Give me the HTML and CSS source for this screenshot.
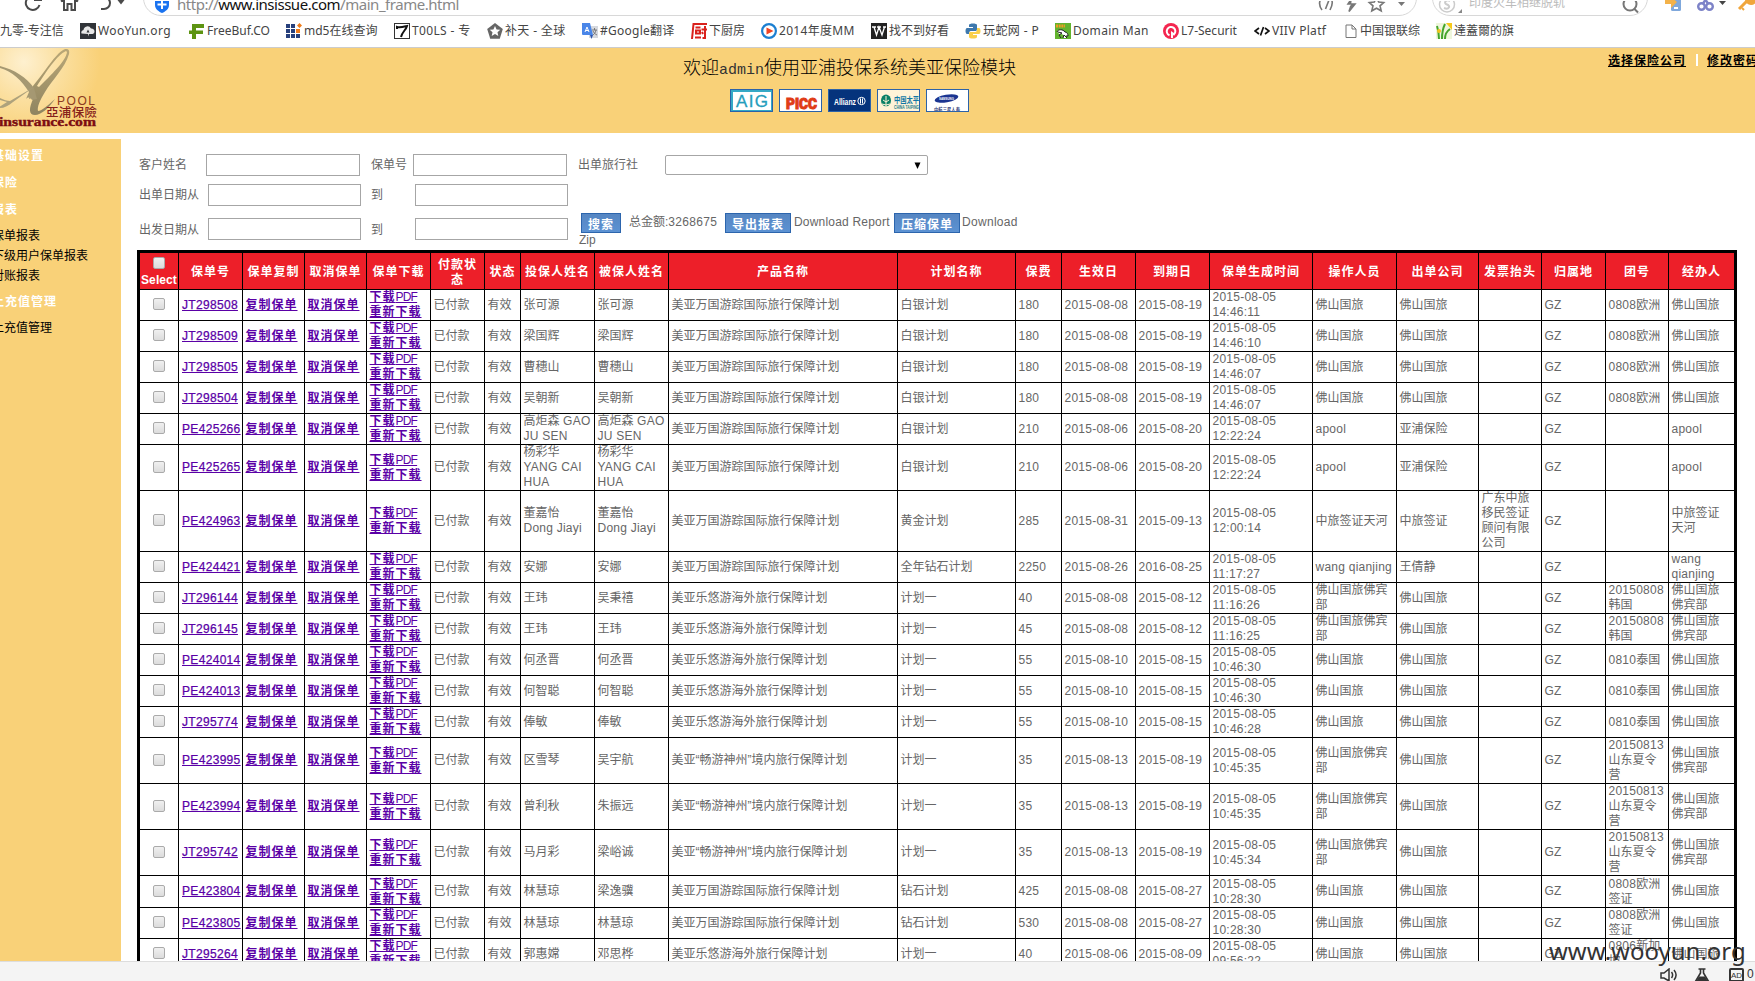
FILE: index.html
```html
<!DOCTYPE html>
<html lang="zh-CN">
<head>
<meta charset="utf-8">
<title>main_frame</title>
<link rel="stylesheet" href="styles.css">
</head>
<body>
<div class="toolbar">
  <svg class="nav" width="143" height="16" viewBox="0 0 143 16" fill="none" stroke="#4a4a4a" stroke-width="2">
    <path d="M36.500 -3A7 7 0 1 0 39.500 5"/><path d="M34 0h7v-5"/>
    <path d="M61 1.500l8.500-7 8.500 7M64 0v10h3.500V4h4v6H75V0"/>
    <path d="M100 -3h4a5 5 0 0 1 0 12h-3"/>
    <path d="M117.500 0h7l-3.500 4.500z" fill="#4a4a4a" stroke="none"/>
  </svg>
  <div class="address">
    <svg width="16" height="16" viewBox="0 0 16 16"><path d="M1-4h14v8c0 4-3.500 6.500-7 8-3.500-1.500-7-4-7-8z" fill="#1a73f0"/><path d="M8-1v9M3.500 3.500h9" stroke="#fff" stroke-width="2"/></svg>
    <span class="url">http://<b>www.insissue.com</b>/main_frame.html</span>
    <svg class="tools" width="90" height="16" viewBox="0 0 90 16" fill="none" stroke="#777" stroke-width="1.600">
      <path d="M5-4c-3 4-3 9 0 13M13-4c3 4 3 7 0 13M8-1h4L8.500 8"/>
      <path d="M35-3l-4 6h7l-6 7.500 2-6" fill="#777"/>
      <path d="M59.500-4l2.200 5 5 .5-3.700 3.300 1.200 5-4.700-2.600-4.700 2.600 1.200-5L52.300 1.500l5-.5z"/>
      <path d="M81 1h7l-3.500 4z" fill="#777" stroke="none"/>
    </svg>
  </div>
  <div class="search">
    <svg width="26" height="16" viewBox="0 0 26 16"><circle cx="9" cy="3.500" r="7.500" fill="none" stroke="#ccc" stroke-width="1.500"/><path d="M12 0C8-2 5 2 9 3.500S11 9 6 7" fill="none" stroke="#ccc" stroke-width="2"/><path d="M24 8v4h-4z" fill="#888"/></svg>
    <span class="hint">印度火车相继脱轨</span>
    <svg width="20" height="16" viewBox="0 0 20 16" fill="none" stroke="#777" stroke-width="2"><circle cx="9" cy="3" r="6.500"/><path d="M13 7.500l4 4"/></svg>
  </div>
  <svg class="extras" width="90" height="16" viewBox="0 0 90 16">
    <rect x="6" y="-6" width="10" height="17" rx="1.500" fill="#7fa8dc"/><rect x="9" y="7" width="4" height="2" fill="#fff"/><path d="M0 0h5v-4l7 6-6 6V4H0z" fill="#f3b24a"/>
    <g fill="none" stroke="#7d83c8" stroke-width="2.400"><circle cx="36.500" cy="6.500" r="3.300"/><circle cx="44.500" cy="6.500" r="3.300"/><path d="M38 3.500L43-4M43 3.500L38-4"/></g>
    <path d="M54 1h7l-3.500 4z" fill="#444"/>
    <path d="M74 9l9-9" stroke="#f0a63c" stroke-width="3"/><path d="M77 8l2 2" stroke="#f0a63c" stroke-width="2"/><circle cx="86" cy="-1" r="6" fill="#f0a63c"/>
  </svg>
</div>

<div class="bookmarks">
  <span class="bm"><span>九零-专注信</span></span>
  <span class="bm"><svg viewBox="0 0 16 16"><rect width="16" height="16" fill="#303338"/><path d="M1.500 10.500a2.500 2.500 0 0 1 2-3.500A4 4 0 0 1 11 5.500a3 3 0 0 1 3.500 3c0 2-1.500 2.500-3 2.500H9l-1 2.500V11z" fill="#e8e8e8"/><path d="M8 6.500l1.500 3h-3z" fill="#303338"/></svg><span class="t1">WooYun.org</span></span>
  <span class="bm"><svg viewBox="0 0 16 16"><path d="M3 1h12v4H7v2.500h7V11H7v5H3v-5H0V7.500h3z" fill="#5d9412"/></svg><span class="t2">FreeBuf.CO</span></span>
  <span class="bm"><svg viewBox="0 0 16 16"><path d="M0 1h4v4H0zM5 1h4v4H5zM0 6h4v4H0zM5 6h4v4H5zM0 11h4v4H0zM5 11h4v4H5zM10 11h4v4h-4z" fill="#27407c"/><path d="M10 6h4v4h-4zM11 2.500L13.500 0 16 2.500 13.500 5z" fill="#f07c1a"/></svg><span class="t3">md5在线查询</span></span>
  <span class="bm"><svg viewBox="0 0 16 16"><rect x=".5" y=".5" width="15" height="15" fill="#fff" stroke="#333"/><path d="M3 6V4c3 1 6 0 10-1-1 4-5 6-6 11" fill="none" stroke="#111" stroke-width="2"/></svg><span class="t4">T00LS - 专</span></span>
  <span class="bm"><svg viewBox="0 0 16 16"><path d="M8 0l7.800 6-3 9.700H3.200L.2 6z" fill="#666"/><path d="M8 3l1.600 3.400 3.700.4-2.800 2.400.8 3.800L8 11l-3.300 2 .8-3.800-2.800-2.400 3.700-.4z" fill="#fff"/></svg><span class="t5">补天 - 全球</span></span>
  <span class="bm"><svg viewBox="0 0 16 16"><rect x="7" y="3" width="9" height="12" fill="#d5d8de"/><path d="M0 0h8l3 12H1a1 1 0 0 1-1-1z" fill="#4a86e8"/><path d="M8 12h3l-1.500 4z" fill="#2e55ad"/><path d="M3 9l2-5 2 5M3.700 7.500h2.600" stroke="#fff" fill="none"/><path d="M10 7h5M12.500 5v2M14 7c-.500 3-2 4-3 5M11 8c1 2 2 3 4 4" stroke="#666" fill="none" stroke-width=".8"/></svg><span class="t6">#Google翻译</span></span>
  <span class="bm"><svg viewBox="0 0 16 16" fill="none" stroke="#d9211c" stroke-width="2"><path d="M1 16L2.500 1H16M4.500 4.500h5M5 7.500h4v3H5zM4 14.500h6M10.500 6.500H16M14 3v12h-2.500M11 9l1 2"/></svg><span>下厨房</span></span>
  <span class="bm"><svg viewBox="0 0 16 16"><circle cx="8" cy="8" r="6.900" fill="#fff" stroke="#1b7fd1" stroke-width="2.200"/><path d="M5.500 4.500l7 3.500-7 3.500z" fill="#ef4323"/></svg><span class="t8">2014年度MM</span></span>
  <span class="bm"><svg viewBox="0 0 16 16"><rect width="16" height="16" fill="#222"/><path d="M1 4h4M6 4h4M12 4h3M3 4l2.500 8L8 4l3 8 2.500-8" fill="none" stroke="#fff" stroke-width="1.300"/></svg><span>找不到好看</span></span>
  <span class="bm"><svg viewBox="0 0 16 16"><path d="M4 4V2c0-2 8-2 8 0v4c0 2-1 2-2 2H6C4 8 4 10 4 11H2C0 11 0 5 2 5h6V4z" fill="#3d78ad"/><path d="M12 12v2c0 2-8 2-8 0v-3c0-2 1-2 2-2h4c2 0 2-2 2-4h2c2 0 2 6 0 6H8v1z" fill="#fad04a"/></svg><span class="t10">玩蛇网 - P</span></span>
  <span class="bm"><svg viewBox="0 0 16 16"><rect width="16" height="16" fill="#62b32e"/><path d="M1 3h9" stroke="#f59a23" stroke-width="3" stroke-dasharray="2 .7"/><path d="M2 9c1-3 6-3 8 0 2 0 3 2 3 4l-2 0M3 9l4 1-3 2 2 3M8 15l1-3 3 3" fill="#fff" stroke="#222"/></svg><span class="t11">Domain Man</span></span>
  <span class="bm"><svg viewBox="0 0 16 16"><circle cx="8" cy="8" r="8" fill="#f4264f"/><path d="M6.500 12.300A4.300 4.300 0 1 1 11 11.400l-2-1.500V15" fill="none" stroke="#fff" stroke-width="2"/></svg><span class="t12">L7-Securit</span></span>
  <span class="bm"><svg viewBox="0 0 16 16" fill="none" stroke="#111" stroke-width="1.700"><path d="M5 5L1 8l4 3M11 5l4 3-4 3M9.500 4l-3 8.500"/></svg><span class="t13">VIIV Platf</span></span>
  <span class="bm file"><svg viewBox="0 0 12 16" fill="#fff" stroke="#777"><path d="M1 2h6l4 4v8.500H1zM7 2v4h4"/></svg><span>中国银联综</span></span>
  <span class="bm"><svg viewBox="0 0 16 16"><rect width="16" height="16" fill="#eef6dc"/><path d="M10 0h6v7z" fill="#f7c819"/><path d="M3 16C3 10 2 6 1 3M6 16C6 9 7 5 9 1M9 16c0-5 2-8 5-10" stroke="#45a52c" stroke-width="2" fill="none"/><circle cx="3" cy="8" r="2" fill="#f3c31d"/></svg><span>達蓋爾的旗</span></span>
</div>

<header class="banner">
  <svg class="logo" width="100" height="85" viewBox="0 0 100 85">
    <defs>
      <radialGradient id="glow" gradientUnits="userSpaceOnUse" cx="24" cy="14" r="76"><stop offset="0" stop-color="#fef0cf"/><stop offset=".5" stop-color="#fbdf9f"/><stop offset="1" stop-color="#f9d178"/></radialGradient>
      <linearGradient id="ink" x1="0" y1="0" x2="0" y2="1"><stop offset="0" stop-color="#b9a777"/><stop offset="1" stop-color="#8f8460"/></linearGradient>
    </defs>
    <rect width="100" height="85" fill="url(#glow)"/>
    <path fill-rule="evenodd" d="M33 38C45 24 55 6 64 1.500c4-1.500 6 .5 5 4.500-4 14-17 26-24 38-5 8-8 15-7 19 4 0 10-6 17-12-6 9-14 16-20 16-6 0-7-6-1-18l-5 2zM66 3C57 7 46 24 37 38l2 1C50 28 66 13 67 4z" fill="url(#ink)"/>
    <path d="M0 18c15 4 26 11 34 22l3 11-5 1c-2-3-4-3-6-1l3-7C22 33 12 23 0 20z" fill="#a59872"/>
    <path d="M0 50c4 2 7 3 10 3l24-14-21 15C8 58 4 60 0 60v-1.500l7-4.500-7-2z" fill="#aea27c"/>
    <text x="57" y="56.500" class="lg-pool" textLength="38">POOL</text>
    <text x="46" y="69" class="lg-cjk" textLength="51">亞浦保險</text>
    <text x="-1" y="77.500" class="lg-com" textLength="97" lengthAdjust="spacingAndGlyphs">insurance.com</text>
  </svg>
  <div class="welcome">
    <h1>欢迎<span>admin</span>使用亚浦投保系统美亚保险模块</h1>
    <div class="brands">
      <a class="brand aig"><svg viewBox="0 0 41 21"><path d="M0 1h41M1 0v21" stroke="#35a9c6" stroke-width="2"/><path d="M0 20.500h41M40.500 0v21" stroke="#35a9c6"/><text x="5" y="17" textLength="32">AIG</text></svg></a>
      <a class="brand picc"><svg viewBox="0 0 41 21"><text x="6" y="19" textLength="31" lengthAdjust="spacingAndGlyphs">PICC</text></svg></a>
      <a class="brand allianz"><svg viewBox="0 0 41 21"><text x="5" y="14.500" textLength="22" lengthAdjust="spacingAndGlyphs">Allianz</text><circle cx="32.500" cy="11" r="3.700" fill="none" stroke="#fff"/><path d="M31.500 8.500v5M33.500 8.500v5" stroke="#fff"/></svg></a>
      <a class="brand taiping"><svg viewBox="0 0 41 21"><ellipse cx="8" cy="10.500" rx="5" ry="6" fill="#0a8066"/><path d="M8 6v13M5 10l3 2 3-2M4 14l4 1 4-1M5 18h6" stroke="#fff3d6" fill="none"/><text x="16" y="12.500" class="cn" textLength="25" lengthAdjust="spacingAndGlyphs">中国太平</text><text x="16" y="18.500" class="en" textLength="25" lengthAdjust="spacingAndGlyphs">CHINA TAIPING</text></svg></a>
      <a class="brand samsung"><svg viewBox="0 0 41 21"><ellipse cx="19.500" cy="8.500" rx="12" ry="3.800" transform="rotate(-10 19.500 8.500)" fill="#1b3591"/><text x="12" y="10" class="en" textLength="15" lengthAdjust="spacingAndGlyphs">SAMSUNG</text><text x="7" y="20.500" class="cn" textLength="26" lengthAdjust="spacingAndGlyphs">中航三星人寿</text></svg></a>
    </div>
  </div>
  <nav class="toplinks"><a>选择保险公司</a><i></i><a>修改密码</a></nav>
</header>

<div class="body">
  <aside class="menu">
    <h2>基础设置</h2>
    <h2>保险</h2>
    <h2>报表</h2>
    <a>保单报表</a>
    <a>下级用户保单报表</a>
    <a>对账报表</a>
    <h2 class="late">上充值管理</h2>
    <a class="last">上充值管理</a>
  </aside>
  <main class="content">
    <div class="form">
      <div class="row">
        <label class="first">客户姓名</label><input class="wide" type="text"><label class="second">保单号</label><input class="wide" type="text"><label class="third">出单旅行社</label><div class="select"><svg width="7" height="7" viewBox="0 0 7 7"><path d="M.5 .5h6L3.500 7z"/></svg></div>
      </div>
      <div class="row dates">
        <label class="first">出单日期从</label><input type="text"><label class="second">到</label><input type="text">
      </div>
      <div class="row dates actions">
        <label class="first">出发日期从</label><input type="text"><label class="second">到</label><input type="text">
        <div class="tools2">
          <div class="line"><button class="short">搜索</button><span class="total">总金额:<span class="n">3268675</span></span><button>导出报表</button><span class="rep">Download Report</span><button>压缩保单</button><span class="dl">Download</span></div>
          <div class="zip">Zip</div>
        </div>
      </div>
    </div>
    <table class="policies">
      <colgroup><col class="c0"><col class="c1"><col class="c2"><col class="c2"><col class="c1"><col class="c3"><col class="c4"><col class="c5"><col class="c5"><col class="c6"><col class="c7"><col class="c8"><col class="c5"><col class="c5"><col class="c9"><col class="c10"><col class="c11"><col class="c12"><col class="c1"><col class="c12"><col class="c13"></colgroup>
      <thead><tr>
        <th class="sel"><i class="box"></i><b>Select</b></th><th>保单号</th><th>保单复制</th><th>取消保单</th><th>保单下载</th><th>付款状<br>态</th><th>状态</th><th>投保人姓名</th><th>被保人姓名</th><th>产品名称</th><th>计划名称</th><th>保费</th><th>生效日</th><th>到期日</th><th>保单生成时间</th><th>操作人员</th><th>出单公司</th><th>发票抬头</th><th>归属地</th><th>团号</th><th>经办人</th>
      </tr></thead>
      <tbody id="rows"></tbody>
    </table>
  </main>
</div>

<footer class="status">
  <svg width="18" height="14" viewBox="0 0 18 14" fill="none" stroke="#333" stroke-width="1.500"><path d="M1 5h3l5-4v12L4 10H1zM11.500 4c1.500 2 1.500 4 0 6M14 2c2.500 3 2.500 7 0 10"/></svg>
  <svg width="16" height="14" viewBox="0 0 16 14" fill="none" stroke="#333" stroke-width="1.600"><path d="M4.500 1h7M6.500 1v4L2 12.500h12L9.500 5V1"/><path d="M5 8.500h6l2 3.500H3z" fill="#333" stroke="none"/></svg>
  <span class="ad">AD</span><span class="zero">0</span>
</footer>
<div class="watermark">www.wooyun.org</div>
<script src="app.js"></script>
</body>
</html>
```

FILE: styles.css
```css
* { box-sizing: border-box; }
body {
  margin: 0;
  width: 1755px;
  height: 981px;
  overflow: hidden;
  position: relative;
  display: flex;
  flex-direction: column;
  background: #fff;
  color: #666;
  font: 12px/15px "Liberation Sans", "Noto Sans CJK SC", sans-serif;
}
svg { display: block; flex: none; }

.toolbar { display: flex; height: 16px; overflow: hidden; }
.address {
  display: flex;
  width: 1274px;
  height: 36px;
  margin: -20px 15px 0 0;
  padding: 20px 0 0 10px;
  border: 1px solid #d8d8d8;
  border-radius: 18px;
}
.url {
  margin: -7px 0 0 7px;
  width: 1140px;
  font: 15px/20px "Noto Sans", sans-serif;
  letter-spacing: -.47px;
  color: #888;
  white-space: nowrap;
}
.url b { font-weight: 400; color: #111; }
.search {
  display: flex;
  width: 216px;
  height: 36px;
  margin-top: -20px;
  padding: 20px 0 0 5px;
  border: 1px solid #d8d8d8;
  border-radius: 18px;
}
.hint { width: 156px; margin: -5px 0 0 5px; color: #bbb; white-space: nowrap; }
.search .hint + svg { margin-left: -4px; }
.extras { margin-left: 17px; }

.bookmarks {
  display: grid;
  grid-template-columns: 80px 109px 97px 108px 93px 95px 109px 70px 110px 94px 90px 108px 91px 91px 91px 120px;
  align-items: center;
  height: 32px;
  padding-bottom: 2px;
  border-bottom: 1px solid #ccc;
  overflow: hidden;
  flex: none;
}
.bm { display: flex; gap: 2px; align-items: center; white-space: nowrap; color: #444; font: 12px/16px "Noto Sans", "Noto Sans CJK SC", sans-serif; }
.bm svg { width: 16px; height: 16px; }
.bm.file svg { width: 12px; }
.bm.file { gap: 3px; }
.t1 { letter-spacing: .35px; }
.t4 { letter-spacing: .35px; }
.t5 { letter-spacing: .35px; }
.t6 { letter-spacing: .25px; }
.t8 { letter-spacing: .3px; }
.t10 { letter-spacing: .4px; }
.t11, .t13 { letter-spacing: .3px; }

.banner { display: flex; height: 85px; background: #f9d178; flex: none; overflow: hidden; }
.lg-pool { font: 12px "Liberation Sans"; fill: #8c3b20; }
.lg-cjk { font: 500 12.500px "Noto Sans CJK TC"; fill: #86201a; }
.lg-com { font: bold 13px "Liberation Serif"; fill: #7c0d12; stroke: #7c0d12; stroke-width: .4px; }
.welcome { margin-left: 583px; width: 334px; }
h1 { margin: 6px 0 0; font: 300 18px/24px "Noto Sans CJK SC", sans-serif; color: #000; white-space: nowrap; }
h1 span { font: 15px "Liberation Mono", monospace; color: #333; }
.brands { display: flex; gap: 6px; margin: 10px 0 0 47px; }
.brand { width: 43px; height: 23px; border: 1px solid #2c62a8; background: #fff; }
.aig text { font: 17px "Liberation Sans"; fill: #259dbc; stroke: #259dbc; stroke-width: .3px; }
.picc text { font: 900 15px Roboto, sans-serif; fill: #e03c16; stroke: #e03c16; }
.allianz { background: #05337c; }
.allianz text { font: bold 9px "Liberation Sans"; fill: #fff; }
.taiping { background: #fff3d8; overflow: hidden; }
.taiping .cn { font: bold 8px "Noto Sans CJK SC"; fill: #1177a5; }
.taiping .en { font: bold 4.500px "Liberation Sans"; fill: #1a7c8d; }
.samsung .cn { font: bold 5px "Noto Sans CJK SC"; fill: #34427b; }
.samsung .en { font: bold 4px "Liberation Sans"; fill: #fff; }
.toplinks { display: flex; margin: 5px 0 0 592px; height: 16px; white-space: nowrap; }
.toplinks a { color: #000; font-weight: 700; letter-spacing: 1px; text-decoration: underline; line-height: 16px; }
.toplinks i { width: 2px; height: 12px; margin: 1px 9px 0 10px; background: #fff; flex: none; }

.body { display: flex; height: 828px; overflow: hidden; flex: none; }
.menu { width: 121px; margin-top: 6px; background: #f9d178; overflow: hidden; flex: none; }
.menu h2 { margin: 0 0 12px -8px; font-size: 12px; line-height: 15px; letter-spacing: 1px; color: #fff; }
.menu h2:first-child { margin-top: 10px; }
.menu a { display: block; margin: 0 0 5px -8px; color: #000; white-space: nowrap; }
.menu h2 + a { margin-top: -1px; }
.menu h2.late { margin-top: 11px; }
.menu a.last { margin-top: -1px; }

.content { margin-left: 16px; padding-top: 21px; flex: none; }
.form { height: 96px; }
.row { display: flex; height: 22px; padding-left: 2px; align-items: center; margin-bottom: 8px; white-space: nowrap; }
.row label { flex: none; padding-top: 1px; }
.first { width: 67px; }
.dates .first { width: 69px; }
.second { width: 42px; margin-left: 11px; }
.dates .second { width: 44px; margin-left: 10px; }
.third { width: 87px; margin-left: 11px; }
.row input { width: 153px; height: 22px; margin: 0; padding: 0; border: 1px solid #a6a6a6; background: #fff; flex: none; }
.row input.wide { width: 154px; }
.select { display: flex; align-items: center; justify-content: flex-end; width: 263px; height: 20px; padding-right: 6px; border: 1px solid #a6a6a6; border-radius: 2px; }
.actions { height: 44px; margin: -8px 0 0; padding-top: 2px; }
.actions label { padding-top: 3px; }
.tools2 { margin: 5px 0 0 11px; height: 37px; }
.line { display: flex; align-items: center; height: 20px; padding-left: 2px; }
.line span { position: relative; top: -.5px; }
.line button {
  width: 66px;
  height: 20px;
  padding: 1px 0 0;
  border: 1px solid #2c65ad;
  background: linear-gradient(#5686c2, #5c92d3);
  color: #fff;
  font: bold 12px/15px "Noto Sans CJK SC", sans-serif;
  letter-spacing: 1px;
  flex: none;
}
.line button.short { width: 40px; }
.total { width: 96px; margin-left: 8px; }
.n { letter-spacing: .3px; }
.line .rep { width: 100px; margin-left: 3px; letter-spacing: .2px; }
.dl { margin-left: 2px; letter-spacing: .3px; }
.zip { line-height: 14px; }

.policies { table-layout: fixed; width: 1600px; border: 3px solid #000; border-collapse: separate; border-spacing: 0; }
.c0 { width: 39px; } .c1 { width: 64px; } .c2 { width: 62px; } .c3 { width: 54px; } .c4 { width: 36px; }
.c5 { width: 74px; } .c6 { width: 229px; } .c7 { width: 118px; } .c8 { width: 46px; } .c9 { width: 103px; }
.c10 { width: 84px; } .c11 { width: 82px; } .c12 { width: 63px; } .c13 { width: 65px; }
.policies th { height: 37px; padding: 3px 0 0; background: #ed1f29; color: #fff; line-height: 15px; letter-spacing: 1px; border: solid #000; border-width: 0 1px 1px 0; white-space: nowrap; }
.policies th.sel b { display: block; letter-spacing: .1px; margin-top: 4px; }
.policies td { height: 31px; padding: 0 0 0 2.5px; border: solid #000; border-width: 0 1px 1px 0; white-space: nowrap; line-height: 15px; }
.policies th:last-child, .policies td:last-child { border-right: 0; }
.policies td:first-child { padding: 0; }
.h46 td { height: 46px; }
.h61 td { height: 61px; }
.h32 td { height: 32px; }
.box { display: block; width: 12px; height: 12px; margin: 0 auto; border: 1px solid #aaa; border-radius: 2px; background: linear-gradient(#f0f0f0, #dcdcdc); }
td .box { margin-bottom: 2px; }
.l { letter-spacing: .24px; }
.policies a { color: #5a00a6; text-decoration: underline; font-weight: 700; letter-spacing: 1px; }
.policies a.id { font-weight: 400; letter-spacing: .32px; margin-left: .5px; -webkit-text-stroke: .25px #5a00a6; }
.policies a .p { font-weight: 400; letter-spacing: -.8px; }

.status { display: flex; height: 20px; padding: 6px 0 0 1660px; background: #f4f4f4; border-top: 1px solid #ddd; flex: none; overflow: hidden; color: #333; }
.status svg + svg { margin-left: 16px; }
.ad { width: 15px; height: 14px; margin-left: 19px; border: 2px solid #333; border-radius: 2px; font-size: 8px; line-height: 11px; text-align: center; flex: none; }
.zero { margin-left: 3px; line-height: 13px; }
.watermark { position: absolute; left: 1549px; top: 934px; font: 24px/34px "Noto Sans", sans-serif; color: #333; white-space: nowrap; }
```

FILE: app.js
```js
const WG = '美亚万国游踪国际旅行保障计划';
const LY = '美亚乐悠游海外旅行保障计划';
const CY = '美亚“畅游神州”境内旅行保障计划';
const FS = '佛山国旅';
const FB = '佛山国旅佛宾|部';
const FC = '佛山国旅|佛宾部';

// [policy, holder, insured, product, plan, fee, from, to, created, operator, company, invoice, group, agent, row class]
const policies = [
  ['JT298508', '张可源', '张可源', WG, '白银计划', '180', '08-08', '2015-08-19', '14:46:11', FS, FS, '', '0808欧洲', FS],
  ['JT298509', '梁国辉', '梁国辉', WG, '白银计划', '180', '08-08', '2015-08-19', '14:46:10', FS, FS, '', '0808欧洲', FS],
  ['JT298505', '曹穗山', '曹穗山', WG, '白银计划', '180', '08-08', '2015-08-19', '14:46:07', FS, FS, '', '0808欧洲', FS],
  ['JT298504', '吴朝新', '吴朝新', WG, '白银计划', '180', '08-08', '2015-08-19', '14:46:07', FS, FS, '', '0808欧洲', FS],
  ['PE425266', '高炬森 GAO|JU SEN', '高炬森 GAO|JU SEN', WG, '白银计划', '210', '08-06', '2015-08-20', '12:22:24', 'apool', '亚浦保险', '', '', 'apool'],
  ['PE425265', '杨彩华|YANG CAI|HUA', '杨彩华|YANG CAI|HUA', WG, '白银计划', '210', '08-06', '2015-08-20', '12:22:24', 'apool', '亚浦保险', '', '', 'apool', 'h46'],
  ['PE424963', '董嘉怡|Dong Jiayi', '董嘉怡|Dong Jiayi', WG, '黄金计划', '285', '08-31', '2015-09-13', '12:00:14', '中旅签证天河', '中旅签证', '广东中旅|移民签证|顾问有限|公司', '', '中旅签证|天河', 'h61'],
  ['PE424421', '安娜', '安娜', WG, '全年钻石计划', '2250', '08-26', '2016-08-25', '11:17:27', 'wang qianjing', '王倩静', '', '', 'wang|qianjing'],
  ['JT296144', '王玮', '吴秉禧', LY, '计划一', '40', '08-08', '2015-08-12', '11:16:26', FB, FS, '', '20150808|韩国', FC],
  ['JT296145', '王玮', '王玮', LY, '计划一', '45', '08-08', '2015-08-12', '11:16:25', FB, FS, '', '20150808|韩国', FC],
  ['PE424014', '何丞晋', '何丞晋', LY, '计划一', '55', '08-10', '2015-08-15', '10:46:30', FS, FS, '', '0810泰国', FS],
  ['PE424013', '何智聪', '何智聪', LY, '计划一', '55', '08-10', '2015-08-15', '10:46:30', FS, FS, '', '0810泰国', FS],
  ['JT295774', '俸敏', '俸敏', LY, '计划一', '55', '08-10', '2015-08-15', '10:46:28', FS, FS, '', '0810泰国', FS],
  ['PE423995', '区雪琴', '吴宇航', CY, '计划一', '35', '08-13', '2015-08-19', '10:45:35', FB, FS, '', '20150813|山东夏令|营', FC, 'h46'],
  ['PE423994', '曾利秋', '朱振远', CY, '计划一', '35', '08-13', '2015-08-19', '10:45:35', FB, FS, '', '20150813|山东夏令|营', FC, 'h46'],
  ['JT295742', '马月彩', '梁峪诚', CY, '计划一', '35', '08-13', '2015-08-19', '10:45:34', FB, FS, '', '20150813|山东夏令|营', FC, 'h46'],
  ['PE423804', '林慧琼', '梁逸骥', WG, '钻石计划', '425', '08-08', '2015-08-27', '10:28:30', FS, FS, '', '0808欧洲|签证', FS, 'h32'],
  ['PE423805', '林慧琼', '林慧琼', WG, '钻石计划', '530', '08-08', '2015-08-27', '10:28:30', FS, FS, '', '0808欧洲|签证', FS],
  ['JT295264', '郭惠嫦', '邓思桦', LY, '计划一', '40', '08-06', '2015-08-09', '09:56:22', FS, FS, '', '0806新加|坡', FS],
];

// Latin runs get their own tracking; "|" marks a line break.
const text = s => s.replace(/[\x20-\x7b]+/g, '<span class="l">$&</span>').replace(/\|/g, '<br>');
const td = html => '<td>' + html + '</td>';

document.getElementById('rows').innerHTML = policies.map(p => {
  const [id, holder, insured, product, plan, fee, from, to, time, operator, company, invoice, group, agent, cls] = p;
  const cells = ['已付款', '有效', holder, insured, product, plan, fee, '2015-' + from, to, '2015-08-05|' + time,
    operator, company, invoice, 'GZ', group, agent];
  return '<tr class="' + (cls || '') + '">' +
    td('<i class="box"></i>') +
    td('<a class="id">' + id + '</a>') +
    td('<a>复制保单</a>') +
    td('<a>取消保单</a>') +
    td('<a>下载<span class="p">PDF</span></a><br><a>重新下载</a>') +
    cells.map(c => td(text(c))).join('') + '</tr>';
}).join('');
```
